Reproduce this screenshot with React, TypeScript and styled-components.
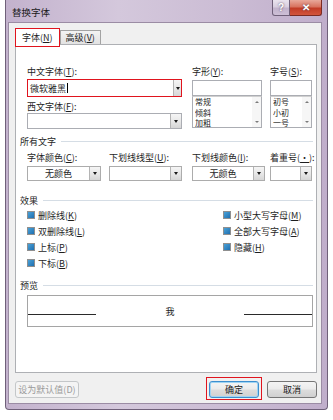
import * as React from 'react'
import styled, { createGlobalStyle } from 'styled-components'

const FONT = `"Noto Sans CJK SC", "Liberation Sans", sans-serif`

const GlobalStyle = createGlobalStyle`
  html, body {
    margin: 0;
    padding: 0;
    background: #ffffff;
  }

  body {
    font-family: ${FONT};
    font-size: 9px;
    color: #1e1e1e;
  }
`

type Combo = { label: string; hotkey: string; value?: string; width: number }

const colorCombos: Combo[] = [
  { label: '字体颜色', hotkey: 'C', value: '无颜色', width: 74 },
  { label: '下划线线型', hotkey: 'U', width: 73 },
  { label: '下划线颜色', hotkey: 'I', value: '无颜色', width: 73 },
  { label: '着重号', hotkey: '·', width: 42 },
]

const leftEffects = [
  ['删除线', 'K'],
  ['双删除线', 'L'],
  ['上标', 'P'],
  ['下标', 'B'],
]

const rightEffects = [
  ['小型大写字母', 'M'],
  ['全部大写字母', 'A'],
  ['隐藏', 'H'],
]

export default function App() {
  return (
    <Page>
      <GlobalStyle />
      <Window>
        <TitleBar>
          <Title>替换字体</Title>
          <CaptionButton>?</CaptionButton>
          <CaptionButton $close>✕</CaptionButton>
        </TitleBar>

        <Client>
          <TabStrip>
            <Tab $active>字体(<Key>N</Key>)</Tab>
            <Tab>高级(<Key>V</Key>)</Tab>
          </TabStrip>

          <Panel>
            <FontRow>
              <Column $width={155}>
                <Label>中文字体(<Key>T</Key>):</Label>
                <TextBox $height={18} $highlight>
                  <Value>微软雅黑<Caret /></Value>
                  <DropButton $narrow>
                    <Arrow />
                  </DropButton>
                </TextBox>
                <Label $spaced>西文字体(<Key>F</Key>):</Label>
                <TextBox $height={16}>
                  <Value />
                  <DropButton>
                    <Arrow />
                  </DropButton>
                </TextBox>
              </Column>

              <Column $width={70}>
                <Label>字形(<Key>Y</Key>):</Label>
                <TextBox $height={16} $lowered />
                <ListBox items={['常规', '倾斜', '加粗']} />
              </Column>

              <Column $width={42}>
                <Label>字号(<Key>S</Key>):</Label>
                <TextBox $height={16} $lowered />
                <ListBox items={['初号', '小初', '一号']} />
              </Column>
            </FontRow>

            <GroupHeader>所有文字</GroupHeader>
            <ComboRow>
              {colorCombos.map(c => (
                <Column key={c.hotkey}>
                  <Label>
                    {c.label}(<Key>{c.hotkey}</Key>):
                  </Label>
                  <ComboBox style={{ width: c.width }}>
                    <ComboText>{c.value}</ComboText>
                    <DropButton>
                      <Arrow />
                    </DropButton>
                  </ComboBox>
                </Column>
              ))}
            </ComboRow>

            <GroupHeader $gap={14}>效果</GroupHeader>
            <EffectGrid>
              <Column>
                {leftEffects.map(([text, key]) => (
                  <Check key={key}>
                    <CheckBox />
                    <span>
                      {text}(<Key>{key}</Key>)
                    </span>
                  </Check>
                ))}
              </Column>
              <Column>
                {rightEffects.map(([text, key]) => (
                  <Check key={key}>
                    <CheckBox />
                    <span>
                      {text}(<Key>{key}</Key>)
                    </span>
                  </Check>
                ))}
              </Column>
            </EffectGrid>

            <GroupHeader $gap={9}>预览</GroupHeader>
            <Preview>
              <PreviewLine />
              <PreviewText>我</PreviewText>
              <PreviewLine />
            </Preview>
          </Panel>

          <Footer>
            <Button $disabled>设为默认值(D)</Button>
            <Spacer />
            <Highlight>
              <Button $primary>确定</Button>
            </Highlight>
            <Button>取消</Button>
          </Footer>
        </Client>
      </Window>
    </Page>
  )
}

const ListBox: React.FC<{ items: string[] }> = ({ items }) => (
  <List>
    <ListItems>
      {items.map(item => (
        <ListItem key={item}>{item}</ListItem>
      ))}
    </ListItems>
    <ScrollBar>
      <ScrollArrow $up />
      <ScrollArrow />
    </ScrollBar>
  </List>
)

const Page = styled.div`
  width: 333px;
  height: 420px;
  padding-left: 5px;
  box-sizing: border-box;
  overflow: hidden;
`

const Window = styled.div`
  width: 323px;
  height: 410px;
  box-sizing: border-box;
  display: flex;
  flex-direction: column;
  padding: 0 5px 5px 2px;
  border: 1px solid #6f6079;
  border-top: none;
  border-radius: 0 0 4px 4px;
  background: linear-gradient(90deg, #c3b2cd 0%, #d4c8dc 35%, #cbbcd4 70%, #c0aecb 100%);
`

const TitleBar = styled.div`
  height: 22px;
  display: flex;
  align-items: flex-start;
  flex-shrink: 0;
`

const Title = styled.div`
  flex: 1;
  padding: 6px 0 0 4px;
  font-size: 9.5px;
  line-height: 12px;
  color: #1a1a1a;
`

const CaptionButton = styled.div<{ $close?: boolean }>`
  width: ${p => (p.$close ? 32 : 18)}px;
  height: 16px;
  box-sizing: border-box;
  display: flex;
  align-items: center;
  justify-content: center;
  border: 1px solid ${p => (p.$close ? '#7c2b22' : '#6f6079')};
  border-top: none;
  border-left-width: ${p => (p.$close ? 0 : 1)}px;
  border-radius: ${p => (p.$close ? '0 0 3px 0' : '0 0 0 3px')};
  background: ${p =>
    p.$close
      ? 'linear-gradient(#e8a89a 0%, #d8735f 45%, #c23c26 55%, #d2553c 100%)'
      : 'linear-gradient(#eae3ee 0%, #d9cfe0 45%, #c2b3cc 55%, #cdbfd6 100%)'};
  color: #ffffff;
  font-family: "Liberation Sans", sans-serif;
  font-weight: bold;
  font-size: 10px;
  text-shadow: 0 0 2px #4a3a52;
`

const Client = styled.div`
  flex: 1;
  display: flex;
  flex-direction: column;
  box-sizing: border-box;
  padding: 5px 4px 5px 6px;
  border: 1px solid #9b8ca4;
  background: #f0f0f0;
`

const TabStrip = styled.div`
  height: 16px;
  display: flex;
  align-items: flex-end;
  flex-shrink: 0;
`

const Tab = styled.div<{ $active?: boolean }>`
  position: relative;
  z-index: ${p => (p.$active ? 1 : 0)};
  box-sizing: border-box;
  height: ${p => (p.$active ? 19 : 14)}px;
  margin-bottom: ${p => (p.$active ? -3 : 0)}px;
  padding: ${p => (p.$active ? '3px 6px 0' : '1px 5px 0')};
  line-height: 11px;
  white-space: nowrap;
  border: ${p => (p.$active ? '1.5px solid #e0141e' : '1px solid #a3a3a3')};
  border-bottom: ${p => (p.$active ? '1.5px solid #e0141e' : 'none')};
  background: ${p => (p.$active ? '#ffffff' : 'linear-gradient(#f3f3f3, #e2e2e2)')};
`

const Panel = styled.div`
  flex: 1;
  box-sizing: border-box;
  padding: 21px 3px 0 4px;
  border: 1px solid #aeb0b4;
  background: #ffffff;
`

const FontRow = styled.div`
  display: flex;
  margin-left: 7px;

  & > :nth-child(1) {
    margin-right: 10px;
  }

  & > :nth-child(2) {
    margin-right: 8px;
  }
`

const Column = styled.div<{ $width?: number }>`
  display: flex;
  flex-direction: column;
  width: ${p => (p.$width ? `${p.$width}px` : 'auto')};
`

const Label = styled.div<{ $spaced?: boolean }>`
  height: 11px;
  line-height: 11px;
  margin: ${p => (p.$spaced ? '4px 0 1px' : '0 0 2px')};
  white-space: nowrap;
`

const Key = styled.span`
  text-decoration: underline;
`

const TextBox = styled.div<{ $height: number; $highlight?: boolean; $lowered?: boolean }>`
  box-sizing: border-box;
  height: ${p => p.$height}px;
  margin-top: ${p => (p.$lowered ? 1 : 0)}px;
  display: flex;
  align-items: stretch;
  border: 1px solid ${p => (p.$highlight ? '#e0141e' : '#abadb3')};
  background: #ffffff;
`

const Value = styled.div`
  flex: 1;
  display: flex;
  align-items: center;
  padding-left: 2px;
  line-height: 11px;
`

const Caret = styled.span`
  display: inline-block;
  width: 1px;
  height: 10px;
  margin-left: 1px;
  background: #000000;
`

const DropButton = styled.div<{ $narrow?: boolean }>`
  width: ${p => (p.$narrow ? 7 : 10)}px;
  display: flex;
  align-items: center;
  justify-content: center;
  border-left: 1px solid #b4b4b4;
  background: linear-gradient(#f5f5f5 0%, #e8e8e8 50%, #d6d6d6 100%);
`

const Arrow = styled.span`
  width: 0;
  height: 0;
  border-left: 2.5px solid transparent;
  border-right: 2.5px solid transparent;
  border-top: 3px solid #1a1a1a;
`

const List = styled.div`
  height: 32px;
  box-sizing: border-box;
  display: flex;
  border: 1px solid #abadb3;
  border-top-color: #d0d0d0;
  background: #ffffff;
  overflow: hidden;
`

const ListItems = styled.div`
  flex: 1;
  padding-left: 2px;
`

const ListItem = styled.div`
  height: 10.5px;
  font-size: 8px;
  line-height: 10.5px;
  white-space: nowrap;
  overflow: hidden;
`

const ScrollBar = styled.div`
  width: 9px;
  display: flex;
  flex-direction: column;
  justify-content: space-between;
  align-items: center;
  padding: 4px 0;
  background: #f6f6f6;
`

const ScrollArrow = styled.span<{ $up?: boolean }>`
  width: 0;
  height: 0;
  border-left: 2px solid transparent;
  border-right: 2px solid transparent;
  ${p => (p.$up ? 'border-bottom: 2px solid #7a7a7a;' : 'border-top: 2px solid #7a7a7a;')}
`

const GroupHeader = styled.div<{ $gap?: number }>`
  display: flex;
  align-items: center;
  gap: 5px;
  height: 11px;
  line-height: 11px;
  margin-top: ${p => p.$gap ?? 7}px;

  &::after {
    content: '';
    flex: 1;
    height: 1px;
    background: #d5dde5;
  }
`

const ComboRow = styled.div`
  display: grid;
  grid-template-columns: 82px 83px 78px 42px;
  margin: 5px 0 0 7px;
`

const ComboBox = styled.div`
  box-sizing: border-box;
  height: 15px;
  margin-top: 1px;
  display: flex;
  border: 1px solid #acacac;
  background: #ffffff;
`

const ComboText = styled.div`
  flex: 1;
  text-align: center;
  line-height: 13px;
`

const EffectGrid = styled.div`
  display: grid;
  grid-template-columns: 196px 1fr;
  margin: 1px 0 0 7px;
`

const Check = styled.div`
  height: 16px;
  display: flex;
  align-items: center;
  gap: 3px;
  white-space: nowrap;
`

const CheckBox = styled.span`
  width: 8px;
  height: 8px;
  box-sizing: border-box;
  border: 1px solid #8f8f8f;
  background: #ffffff;
  display: flex;
  align-items: center;
  justify-content: center;

  &::after {
    content: '';
    width: 6px;
    height: 6px;
    background: linear-gradient(135deg, #4aa2d8 0%, #1f6fb0 100%);
  }
`

const Preview = styled.div`
  height: 32px;
  margin: 4px 0 0 7px;
  box-sizing: border-box;
  display: flex;
  align-items: flex-end;
  padding-bottom: 10px;
  border: 1px solid #a5a5a5;
`

const PreviewLine = styled.div`
  width: 68px;
  height: 1px;
  margin-bottom: 1px;
  background: #2a2a2a;
`

const PreviewText = styled.div`
  flex: 1;
  text-align: center;
  line-height: 9px;
`

const Footer = styled.div`
  display: flex;
  align-items: center;
  gap: 8px;
  margin-top: 8px;
  flex-shrink: 0;
`

const Spacer = styled.div`
  flex: 1;
`

const Highlight = styled.div`
  margin: -4px -3px -2px;
  padding: 3px 2px 1px;
  border: 1px solid #e0141e;
  display: flex;
`

const Button = styled.div<{ $primary?: boolean; $disabled?: boolean }>`
  box-sizing: border-box;
  width: ${p => (p.$disabled ? 64 : 50)}px;
  height: 17px;
  display: flex;
  align-items: center;
  justify-content: center;
  white-space: nowrap;
  border-radius: 3px;
  border: 1px solid ${p => (p.$disabled ? '#c4c7c9' : p.$primary ? '#3d8fcf' : '#767676')};
  background: ${p =>
    p.$disabled
      ? '#f4f4f4'
      : 'linear-gradient(#f4f4f4 0%, #ebebeb 48%, #dddddd 52%, #d0d0d0 100%)'};
  color: ${p => (p.$disabled ? '#9a9a9a' : '#1a1a1a')};
  ${p => (p.$primary ? 'box-shadow: inset 0 0 0 1px #9fd4f3;' : '')}
`
